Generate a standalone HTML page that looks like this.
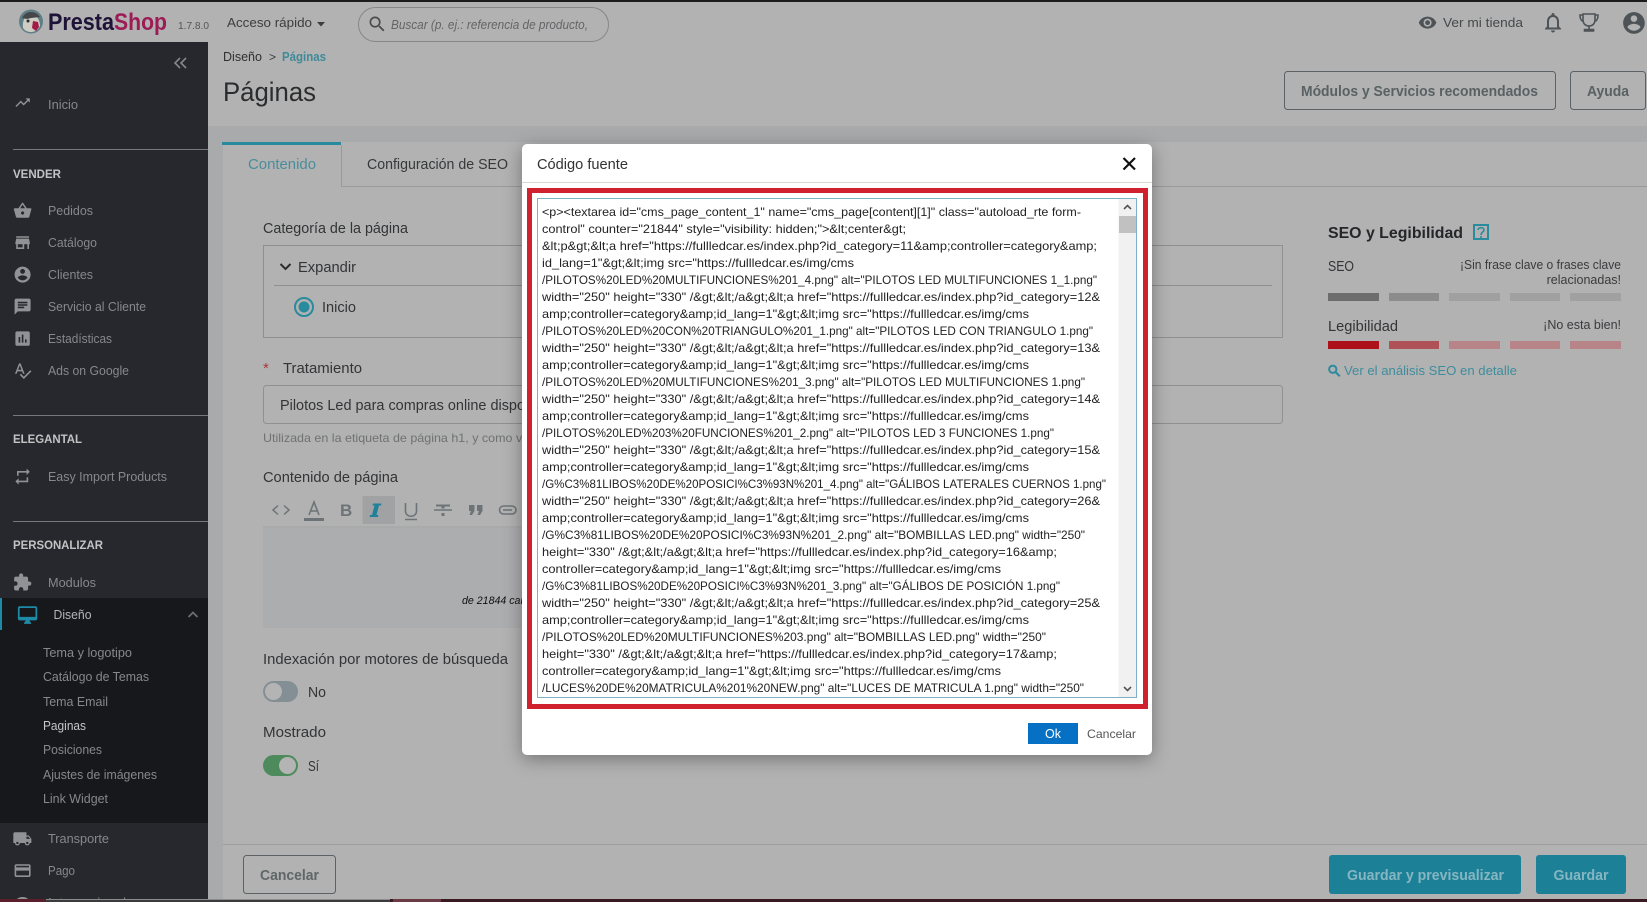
<!DOCTYPE html>
<html lang="es"><head><meta charset="utf-8"><title>Páginas - PrestaShop</title>
<style>
html,body{margin:0;padding:0;width:1647px;height:902px;overflow:hidden;background:#b2b2b2}
svg{display:block;position:absolute;left:0;top:0}
text{font-family:"Liberation Sans",Arial,sans-serif;white-space:pre}
.s{font-size:13px;fill:#87888b}
.h{font-size:12px;font-weight:bold;fill:#c2c3c4}
.c{font-size:14.5px;fill:#333436}
.r{font-size:12.5px;fill:#3a3b3d;text-anchor:end}
.b{font-size:14.5px;font-weight:bold}
#m{position:absolute;left:522px;top:144px;width:630px;height:611px;border-radius:5px;background:#fff;box-shadow:0 4px 18px rgba(0,0,0,.35)}
</style></head><body>
<svg width="1647" height="902" viewBox="0 0 1647 902" xmlns="http://www.w3.org/2000/svg">
<!-- base -->
<rect width="1647" height="902" fill="#b2b2b2"/>
<rect width="1647" height="2" fill="#1c1c1e"/>
<rect x="208" y="126" width="1439" height="16" fill="#a8aaac"/>
<rect x="208" y="126" width="15" height="776" fill="#a8aaac"/>
<rect x="223" y="142" width="1424" height="760" fill="#b2b2b2"/>

<!-- header -->
<circle cx="31" cy="21.5" r="12" fill="#5f7f86"/>
<path d="M23 28c-1-7 2-13 8-13s9 5 9 11c-2 4-5 6-9 6-3 0-6-1-8-4z" fill="#cfccc4"/>
<path d="M22 18c2-4 5-6 9-6s7 2 9 5l-9 1-4 1z" fill="#45464a"/>
<path d="M33 21l5 1 1 5-3 4-4-3z" fill="#a11c47"/>
<circle cx="28" cy="21" r="1.5" fill="#2a2a2e"/>
<text x="48" y="30" font-size="24.5" font-weight="bold" fill="#1f1338" textLength="66" lengthAdjust="spacingAndGlyphs">Presta</text>
<text x="114" y="30" font-size="24.5" font-weight="bold" fill="#9c1c55" textLength="53" lengthAdjust="spacingAndGlyphs">Shop</text>
<text x="178" y="29" font-size="10.5" fill="#555" textLength="31" lengthAdjust="spacingAndGlyphs">1.7.8.0</text>
<text x="227" y="27" font-size="13" fill="#3c3d3f" textLength="85" lengthAdjust="spacingAndGlyphs">Acceso rápido</text>
<path d="M317 22h8l-4 4.5z" fill="#3c3d3f"/>
<rect x="358.5" y="7.5" width="250" height="34" rx="17" fill="none" stroke="#878787"/>
<g transform="translate(367,14) scale(.85)"><path d="M15.5 14h-.79l-.28-.27C15.41 12.59 16 11.11 16 9.5 16 5.91 13.09 3 9.5 3S3 5.91 3 9.5 5.91 16 9.5 16c1.61 0 3.09-.59 4.23-1.57l.27.28v.79l5 4.99L20.49 19l-4.99-5zm-6 0C7.01 14 5 11.99 5 9.5S7.01 5 9.5 5 14 7.01 14 9.5 11.99 14 9.5 14z" fill="#4a4b4d"/></g>
<text x="391" y="29" font-size="12.5" font-style="italic" fill="#636466" textLength="197" lengthAdjust="spacingAndGlyphs">Buscar (p. ej.: referencia de producto,</text>

<g transform="translate(1418,13) scale(.8)"><path d="M12 4.5C7 4.5 2.73 7.61 1 12c1.73 4.39 6 7.5 11 7.5s9.27-3.11 11-7.5c-1.73-4.39-6-7.5-11-7.5zM12 17c-2.76 0-5-2.24-5-5s2.24-5 5-5 5 2.24 5 5-2.24 5-5 5zm0-8c-1.66 0-3 1.34-3 3s1.34 3 3 3 3-1.34 3-3-1.34-3-3-3z" fill="#4d5356"/></g>
<text x="1443" y="27" font-size="13" fill="#45494b" textLength="80" lengthAdjust="spacingAndGlyphs">Ver mi tienda</text>
<g transform="translate(1541,10.5) scale(1)"><path d="M12 22c1.1 0 2-.9 2-2h-4c0 1.1.89 2 2 2zm6-6v-5c0-3.07-1.64-5.64-4.5-6.32V4c0-.83-.67-1.5-1.5-1.5s-1.5.67-1.5 1.5v.68C7.63 5.36 6 7.92 6 11v5l-2 2v1h16v-1l-2-2zm-2 1H8v-6c0-2.48 1.51-4.5 4-4.5s4 2.02 4 4.5v6z" fill="#4d5356"/></g>
<path d="M1583 14h12v6c0 4-3 6-6 6s-6-2-6-6zM1583 15h-3c0 4 1 6 4 7M1595 15h3c0 4-1 6-4 7M1589 26v3M1584.5 29.5h9v1.5h-9z" fill="none" stroke="#4d5356" stroke-width="1.6"/>
<g transform="translate(1621,10) scale(1.08)"><path d="M12 2C6.48 2 2 6.48 2 12s4.48 10 10 10 10-4.48 10-10S17.52 2 12 2zm0 3c1.66 0 3 1.34 3 3s-1.34 3-3 3-3-1.34-3-3 1.34-3 3-3zm0 14.2c-2.5 0-4.71-1.28-6-3.22.03-1.99 4-3.08 6-3.08 1.99 0 5.97 1.09 6 3.08-1.29 1.94-3.5 3.22-6 3.22z" fill="#4d5356"/></g>

<!-- sidebar -->
<rect x="0" y="42" width="208" height="860" fill="#26282d"/>
<rect x="0" y="598" width="208" height="225" fill="#17181c"/>
<rect x="0" y="598" width="2" height="32" fill="#1f8aa6"/>
<path d="M180 58l-5 5 5 5M186 58l-5 5 5 5" fill="none" stroke="#85878a" stroke-width="1.6"/>

<g fill="#909295">
<g transform="translate(14,94) scale(.72)"><path d="M16 6l2.29 2.29-4.88 4.88-4-4L2 16.59 3.41 18l6-6 4 4 6.3-6.29L22 12V6z"/></g>
<g transform="translate(13,201) scale(.8)"><path d="M17.21 9l-4.38-6.56c-.19-.28-.51-.42-.83-.42-.32 0-.64.14-.83.43L6.79 9H2c-.55 0-1 .45-1 1 0 .09.01.18.04.27l2.54 9.27c.23.84 1 1.46 1.92 1.46h13c.92 0 1.69-.62 1.93-1.46l2.54-9.27L23 10c0-.55-.45-1-1-1h-4.79zM9 9l3-4.4L15 9H9zm3 8c-1.1 0-2-.9-2-2s.9-2 2-2 2 .9 2 2-.9 2-2 2z"/></g>
<g transform="translate(13,233) scale(.8)"><path d="M20 4H4v2h16V4zm1 10v-2l-1-5H4l-1 5v2h1v6h10v-6h4v6h2v-6h1zm-9 4H6v-4h6v4z"/></g>
<g transform="translate(13,265) scale(.8)"><path d="M12 2C6.48 2 2 6.48 2 12s4.48 10 10 10 10-4.48 10-10S17.52 2 12 2zm0 3c1.66 0 3 1.34 3 3s-1.34 3-3 3-3-1.34-3-3 1.34-3 3-3zm0 14.2c-2.5 0-4.71-1.28-6-3.22.03-1.99 4-3.08 6-3.08 1.99 0 5.97 1.09 6 3.08-1.29 1.94-3.5 3.22-6 3.22z"/></g>
<g transform="translate(13,297) scale(.8)"><path d="M20 2H4c-1.1 0-1.99.9-1.99 2L2 22l4-4h14c1.1 0 2-.9 2-2V4c0-1.1-.9-2-2-2zM6 9h12v2H6V9zm8 5H6v-2h8v2zm4-6H6V6h12v2z"/></g>
<g transform="translate(13,329) scale(.8)"><path d="M19 3H5c-1.1 0-2 .9-2 2v14c0 1.1.9 2 2 2h14c1.1 0 2-.9 2-2V5c0-1.1-.9-2-2-2zM9 17H7v-7h2v7zm4 0h-2V7h2v10zm4 0h-2v-4h2v4z"/></g>
<g transform="translate(13,361) scale(.8)"><path d="M12.45 16h2.09L9.43 3H7.57L2.46 16h2.09l1.12-3h5.64l1.14 3zm-6.02-5L8.5 5.48 10.57 11H6.43zm15.16.59l-8.09 8.09L9.83 16l-1.41 1.41 5.09 5.09L23 13l-1.41-1.41z"/></g>
<g transform="translate(13,467) scale(.8)"><path d="M7 7h10v3l4-4-4-4v3H5v6h2V7zm10 10H7v-3l-4 4 4 4v-3h12v-6h-2v4z"/></g>
<g transform="translate(12.5,572.5) scale(.82)"><path d="M20.5 11H19V7c0-1.1-.9-2-2-2h-4V3.5C13 2.12 11.88 1 10.5 1S8 2.12 8 3.5V5H4c-1.1 0-1.99.9-1.99 2v3.8H3.5c1.49 0 2.7 1.21 2.7 2.7s-1.21 2.7-2.7 2.7H2V20c0 1.1.9 2 2 2h3.8v-1.5c0-1.49 1.21-2.7 2.7-2.7 1.49 0 2.7 1.21 2.7 2.7V22H17c1.1 0 2-.9 2-2v-4h1.5c1.38 0 2.5-1.12 2.5-2.5S21.88 11 20.5 11z"/></g>
<g transform="translate(12.5,829) scale(.82)"><path d="M20 8h-3V4H3c-1.1 0-2 .9-2 2v11h2c0 1.66 1.34 3 3 3s3-1.34 3-3h6c0 1.66 1.34 3 3 3s3-1.34 3-3h2v-5l-3-4zM6 18.5c-.83 0-1.5-.67-1.5-1.5s.67-1.5 1.5-1.5 1.5.67 1.5 1.5-.67 1.5-1.5 1.5zm13.5-9l1.96 2.5H17V9.5h2.5zm-1.5 9c-.83 0-1.5-.67-1.5-1.5s.67-1.5 1.5-1.5 1.5.67 1.5 1.5-.67 1.5-1.5 1.5z"/></g>
<g transform="translate(13,861) scale(.8)"><path d="M20 4H4c-1.11 0-1.99.89-1.99 2L2 18c0 1.11.89 2 2 2h16c1.11 0 2-.89 2-2V6c0-1.11-.89-2-2-2zm0 14H4v-6h16v6zm0-10H4V6h16v2z"/></g>
<circle cx="22.5" cy="906" r="9"/>
</g>
<g transform="translate(17,604.5) scale(.88)"><path d="M21 2H3c-1.1 0-2 .9-2 2v12c0 1.1.9 2 2 2h7l-2 3v1h8v-1l-2-3h7c1.1 0 2-.9 2-2V4c0-1.1-.9-2-2-2zm0 12H3V4h18v10z" fill="#1f8aa6"/></g>
<path d="M188.5 617l4.5-4.5 4.5 4.5" fill="none" stroke="#6c6d70" stroke-width="1.8"/>

<g stroke="#77787a" stroke-width="1"><path d="M13 149.5h195M13 415.5h195M13 521.5h195"/></g>

<text class="s" x="48" y="109" textLength="30" lengthAdjust="spacingAndGlyphs">Inicio</text>
<text class="h" x="13" y="178" textLength="48" lengthAdjust="spacingAndGlyphs">VENDER</text>
<text class="s" x="48" y="215" textLength="45" lengthAdjust="spacingAndGlyphs">Pedidos</text>
<text class="s" x="48" y="247" textLength="49" lengthAdjust="spacingAndGlyphs">Catálogo</text>
<text class="s" x="48" y="279" textLength="45" lengthAdjust="spacingAndGlyphs">Clientes</text>
<text class="s" x="48" y="311" textLength="98" lengthAdjust="spacingAndGlyphs">Servicio al Cliente</text>
<text class="s" x="48" y="343" textLength="64" lengthAdjust="spacingAndGlyphs">Estadísticas</text>
<text class="s" x="48" y="375" textLength="81" lengthAdjust="spacingAndGlyphs">Ads on Google</text>
<text class="h" x="13" y="443" textLength="69" lengthAdjust="spacingAndGlyphs">ELEGANTAL</text>
<text class="s" x="48" y="481" textLength="119" lengthAdjust="spacingAndGlyphs">Easy Import Products</text>
<text class="h" x="13" y="549" textLength="90" lengthAdjust="spacingAndGlyphs">PERSONALIZAR</text>
<text class="s" x="48" y="587" textLength="48" lengthAdjust="spacingAndGlyphs">Modulos</text>
<text class="s" x="53.5" y="619" textLength="38" lengthAdjust="spacingAndGlyphs" style="fill:#b5b6b8">Diseño</text>
<text class="s" x="43" y="657" textLength="89" lengthAdjust="spacingAndGlyphs">Tema y logotipo</text>
<text class="s" x="43" y="681" textLength="106" lengthAdjust="spacingAndGlyphs">Catálogo de Temas</text>
<text class="s" x="43" y="706" textLength="65" lengthAdjust="spacingAndGlyphs">Tema Email</text>
<text class="s" x="43" y="730" textLength="43" lengthAdjust="spacingAndGlyphs" style="fill:#c6c7c8">Paginas</text>
<text class="s" x="43" y="754" textLength="59" lengthAdjust="spacingAndGlyphs">Posiciones</text>
<text class="s" x="43" y="779" textLength="114" lengthAdjust="spacingAndGlyphs">Ajustes de imágenes</text>
<text class="s" x="43" y="803" textLength="65" lengthAdjust="spacingAndGlyphs">Link Widget</text>
<text class="s" x="48" y="843" textLength="61" lengthAdjust="spacingAndGlyphs">Transporte</text>
<text class="s" x="48" y="875" textLength="27" lengthAdjust="spacingAndGlyphs">Pago</text>
<text class="s" x="48" y="907" textLength="78" lengthAdjust="spacingAndGlyphs">Internacional</text>

<!-- page head -->
<text x="223" y="61" font-size="12.5" fill="#2f3032" textLength="39" lengthAdjust="spacingAndGlyphs">Diseño</text>
<text x="269" y="61" font-size="12" fill="#3c3d3f">&gt;</text>
<text x="282" y="61" font-size="12.5" font-weight="bold" fill="#3f8a99" textLength="44" lengthAdjust="spacingAndGlyphs">Páginas</text>
<text x="223" y="101" font-size="27" fill="#2b2c2e" textLength="93" lengthAdjust="spacingAndGlyphs">Páginas</text>

<rect x="1284.5" y="71.5" width="271" height="38" rx="3" fill="none" stroke="#5b6164"/>
<text class="b" x="1301" y="96" fill="#596164" textLength="237" lengthAdjust="spacingAndGlyphs">Módulos y Servicios recomendados</text>
<rect x="1570.5" y="71.5" width="75" height="38" rx="3" fill="none" stroke="#5b6164"/>
<text class="b" x="1587" y="96" fill="#596164" textLength="42" lengthAdjust="spacingAndGlyphs">Ayuda</text>

<!-- tabs -->
<path d="M341.5 186.5H1647" stroke="#999a9b" fill="none"/>
<path d="M341.5 145V186.5" stroke="#999a9b" fill="none"/>
<rect x="222" y="142" width="119" height="3" fill="#288a9f"/>
<text x="248" y="169" font-size="15" fill="#4a8d9b" textLength="68" lengthAdjust="spacingAndGlyphs">Contenido</text>
<text x="367" y="169" font-size="15" fill="#37383a" textLength="141" lengthAdjust="spacingAndGlyphs">Configuración de SEO</text>

<!-- form -->
<text class="c" x="263" y="233" textLength="145" lengthAdjust="spacingAndGlyphs">Categoría de la página</text>
<rect x="263.5" y="245.5" width="1019" height="92" fill="none" stroke="#8f9091"/>
<path d="M280.5 264l5 5 5-5" fill="none" stroke="#2c2d2f" stroke-width="2"/>
<text class="c" x="298" y="272" textLength="58" lengthAdjust="spacingAndGlyphs">Expandir</text>
<path d="M274 285.5h998" stroke="#8f9091" fill="none"/>
<circle cx="304" cy="307" r="9" fill="none" stroke="#2a8a9e" stroke-width="2"/>
<circle cx="304" cy="307" r="5.5" fill="#2a8a9e"/>
<text class="c" x="322" y="312" textLength="34" lengthAdjust="spacingAndGlyphs">Inicio</text>

<text x="263" y="373" font-size="15" fill="#a83a3e">*</text>
<text class="c" x="283" y="373" textLength="79" lengthAdjust="spacingAndGlyphs">Tratamiento</text>
<rect x="263.5" y="385.5" width="1019" height="38" rx="3" fill="none" stroke="#8f9091"/>
<text class="c" x="280" y="410" textLength="245" lengthAdjust="spacingAndGlyphs">Pilotos Led para compras online dispo</text>
<text x="263" y="442" font-size="12" fill="#6f7173" textLength="262" lengthAdjust="spacingAndGlyphs">Utilizada en la etiqueta de página h1, y como vi</text>
<text class="c" x="263" y="482" textLength="135" lengthAdjust="spacingAndGlyphs">Contenido de página</text>

<!-- editor toolbar -->
<rect x="362.5" y="496" width="32.5" height="28" fill="#a1a2a3"/>
<path d="M263 527h270" stroke="#a0a1a2" fill="none"/>
<rect x="263" y="528" width="270" height="100" fill="#acadae"/>
<path d="M278 505.5l-5 4.5 5 4.5M284 505.5l5 4.5-5 4.5" fill="none" stroke="#6d7477" stroke-width="1.5"/>
<path d="M309 515l5-13 5 13M311 511h6" fill="none" stroke="#6d7477" stroke-width="1.6"/>
<rect x="304" y="518" width="20" height="3" fill="#6d7477"/>
<text x="340" y="516" font-size="17" font-weight="bold" fill="#6d7477">B</text>
<path d="M373 503.5h8.5l-.5 2h-2l-2.5 9.5h2l-.5 2h-8.5l.5-2h2l2.5-9.5h-2z" fill="#21819a"/>
<path d="M405.5 503v8c0 7 11 7 11 0v-8M405 519.5h12" fill="none" stroke="#6d7477" stroke-width="1.6"/>
<path d="M434 510h18" stroke="#6d7477" stroke-width="1.5" fill="none"/>
<path d="M436 504.5h14v2h-5.5v2h-3v-2H436zM441.5 513h3v3h-3z" fill="#6d7477"/>
<path d="M469 505h5.5v6l-2.5 4h-2.5l1.5-4H469zM477 505h5.5v6l-2.5 4h-2.5l1.5-4H477z" fill="#6d7477"/>
<rect x="499.5" y="506" width="16.5" height="8" rx="4" fill="none" stroke="#6d7477" stroke-width="1.6"/>
<path d="M503 510h9" stroke="#6d7477" stroke-width="1.6" fill="none"/>
<text x="462" y="604" font-size="11" font-style="italic" fill="#111" textLength="62" lengthAdjust="spacingAndGlyphs">de 21844 car</text>

<!-- toggles -->
<text class="c" x="263" y="664" textLength="245" lengthAdjust="spacingAndGlyphs">Indexación por motores de búsqueda</text>
<rect x="263" y="681" width="35" height="21" rx="10.5" fill="#848f95"/>
<circle cx="273.5" cy="691.5" r="8.5" fill="#b4b4b4"/>
<text class="c" x="308" y="697" textLength="18" lengthAdjust="spacingAndGlyphs">No</text>
<text class="c" x="263" y="737" textLength="63" lengthAdjust="spacingAndGlyphs">Mostrado</text>
<rect x="263" y="755" width="35" height="21" rx="10.5" fill="#4e8b5c"/>
<circle cx="287.5" cy="765.5" r="8.5" fill="#b4b4b4"/>
<text class="c" x="308" y="771" textLength="11" lengthAdjust="spacingAndGlyphs">Sí</text>

<!-- SEO side -->
<text x="1328" y="238" font-size="16" font-weight="bold" fill="#25262a" textLength="135" lengthAdjust="spacingAndGlyphs">SEO y Legibilidad</text>
<rect x="1474" y="225" width="14" height="14" fill="none" stroke="#2a8a9e" stroke-width="2"/>
<path d="M1478 230c0-3 6-3 6 0 0 2-3 2-3 5M1481 236v4" fill="none" stroke="#2a8a9e" stroke-width="1.6"/>
<text class="c" x="1328" y="271" textLength="26" lengthAdjust="spacingAndGlyphs">SEO</text>
<text class="r" x="1460" y="269" textLength="161" lengthAdjust="spacingAndGlyphs" style="text-anchor:start">¡Sin frase clave o frases clave</text>
<text class="r" x="1621" y="284">relacionadas!</text>
<rect x="1328" y="293" width="51" height="8" fill="#6d6d6d"/>
<rect x="1389" y="293" width="50" height="8" fill="#8c8c8c"/>
<rect x="1449" y="293" width="51" height="8" fill="#a0a0a0"/>
<rect x="1510" y="293" width="50" height="8" fill="#a0a0a0"/>
<rect x="1570" y="293" width="51" height="8" fill="#a0a0a0"/>
<text class="c" x="1328" y="331" textLength="70" lengthAdjust="spacingAndGlyphs">Legibilidad</text>
<text class="r" x="1621" y="329">¡No esta bien!</text>
<rect x="1328" y="341" width="51" height="8" fill="#ad1119"/>
<rect x="1389" y="341" width="50" height="8" fill="#ae5257"/>
<rect x="1449" y="341" width="51" height="8" fill="#b78488"/>
<rect x="1510" y="341" width="50" height="8" fill="#b78488"/>
<rect x="1570" y="341" width="51" height="8" fill="#b78488"/>
<g transform="translate(1326.5,363) scale(.66)"><path d="M15.5 14h-.79l-.28-.27C15.41 12.59 16 11.11 16 9.5 16 5.91 13.09 3 9.5 3S3 5.91 3 9.5 5.91 16 9.5 16c1.61 0 3.09-.59 4.23-1.57l.27.28v.79l5 4.99L20.49 19l-4.99-5zm-6 0C7.01 14 5 11.99 5 9.5S7.01 5 9.5 5 14 7.01 14 9.5 11.99 14 9.5 14z" fill="#2a8a9e" stroke="#2a8a9e"/></g>
<text x="1344" y="375" font-size="13" fill="#3f8c9c" textLength="173" lengthAdjust="spacingAndGlyphs">Ver el análisis SEO en detalle</text>

<!-- footer -->
<path d="M223 844.5h1424" stroke="#9d9e9f" fill="none"/>
<rect x="243.5" y="855.5" width="92" height="38" rx="3" fill="none" stroke="#5b6164"/>
<text class="b" x="260" y="880" fill="#5f6669" textLength="59" lengthAdjust="spacingAndGlyphs">Cancelar</text>
<rect x="1329" y="855" width="192" height="39" rx="3" fill="#1c8097"/>
<text class="b" x="1347" y="880" fill="#86b6c2" textLength="157" lengthAdjust="spacingAndGlyphs">Guardar y previsualizar</text>
<rect x="1536" y="855" width="90" height="39" rx="3" fill="#1c8097"/>
<text class="b" x="1553.5" y="880" fill="#86b6c2" textLength="55" lengthAdjust="spacingAndGlyphs">Guardar</text>

<!-- bottom strip -->
<rect x="0" y="899" width="1647" height="3" fill="#3a1a22"/>
<rect x="0" y="899" width="46" height="3" fill="#5a1f2a"/>
<rect x="46" y="899" width="344" height="3" fill="#3b3b3d"/>
<rect x="46" y="899" width="344" height="1" fill="#8b8b8b"/>
<rect x="393" y="899" width="48" height="3" fill="#6b3a45"/>
</svg>

<!-- modal -->
<div id="m"></div>
<svg width="1647" height="902" viewBox="0 0 1647 902" xmlns="http://www.w3.org/2000/svg">
<text x="537" y="169" font-size="14.5" fill="#333" textLength="91" lengthAdjust="spacingAndGlyphs">Código fuente</text>
<path d="M1123.5 158l11.5 11.5M1135 158l-11.5 11.5" stroke="#111" stroke-width="2.2" fill="none"/>
<path d="M522 182.5h630" stroke="#d9d9d4" fill="none"/>
<rect x="529.5" y="190.5" width="616" height="516" fill="none" stroke="#d0222e" stroke-width="5"/>
<rect x="537.5" y="198.5" width="599" height="499" fill="#fff" stroke="#7fb0c8"/>
<rect x="1118.5" y="199" width="17.5" height="498" fill="#f1f1f1"/>
<rect x="1119" y="216" width="17" height="17" fill="#c1c1c1"/>
<path d="M1124 209l3.5-3.5 3.5 3.5M1124 687l3.5 3.5 3.5-3.5" fill="none" stroke="#555" stroke-width="1.6"/>

<g font-size="12" fill="#222">
<text x="542" y="216" textLength="539" lengthAdjust="spacingAndGlyphs">&lt;p&gt;&lt;textarea id="cms_page_content_1" name="cms_page[content][1]" class="autoload_rte form-</text>
<text x="542" y="233" textLength="364" lengthAdjust="spacingAndGlyphs">control" counter="21844" style="visibility: hidden;"&gt;&amp;lt;center&amp;gt;</text>
<text x="542" y="250" textLength="555" lengthAdjust="spacingAndGlyphs">&amp;lt;p&amp;gt;&amp;lt;a href="https://fullledcar.es/index.php?id_category=11&amp;amp;controller=category&amp;amp;</text>
<text x="542" y="267" textLength="312" lengthAdjust="spacingAndGlyphs">id_lang=1"&amp;gt;&amp;lt;img src="https://fullledcar.es/img/cms</text>
<text x="542" y="284" textLength="555" lengthAdjust="spacingAndGlyphs">/PILOTOS%20LED%20MULTIFUNCIONES%201_4.png" alt="PILOTOS LED MULTIFUNCIONES 1_1.png"</text>
<text x="542" y="301" textLength="558" lengthAdjust="spacingAndGlyphs">width="250" height="330" /&amp;gt;&amp;lt;/a&amp;gt;&amp;lt;a href="https://fullledcar.es/index.php?id_category=12&amp;</text>
<text x="542" y="318" textLength="487" lengthAdjust="spacingAndGlyphs">amp;controller=category&amp;amp;id_lang=1"&amp;gt;&amp;lt;img src="https://fullledcar.es/img/cms</text>
<text x="542" y="335" textLength="551" lengthAdjust="spacingAndGlyphs">/PILOTOS%20LED%20CON%20TRIANGULO%201_1.png" alt="PILOTOS LED CON TRIANGULO 1.png"</text>
<text x="542" y="352" textLength="558" lengthAdjust="spacingAndGlyphs">width="250" height="330" /&amp;gt;&amp;lt;/a&amp;gt;&amp;lt;a href="https://fullledcar.es/index.php?id_category=13&amp;</text>
<text x="542" y="369" textLength="487" lengthAdjust="spacingAndGlyphs">amp;controller=category&amp;amp;id_lang=1"&amp;gt;&amp;lt;img src="https://fullledcar.es/img/cms</text>
<text x="542" y="386" textLength="543" lengthAdjust="spacingAndGlyphs">/PILOTOS%20LED%20MULTIFUNCIONES%201_3.png" alt="PILOTOS LED MULTIFUNCIONES 1.png"</text>
<text x="542" y="403" textLength="558" lengthAdjust="spacingAndGlyphs">width="250" height="330" /&amp;gt;&amp;lt;/a&amp;gt;&amp;lt;a href="https://fullledcar.es/index.php?id_category=14&amp;</text>
<text x="542" y="420" textLength="487" lengthAdjust="spacingAndGlyphs">amp;controller=category&amp;amp;id_lang=1"&amp;gt;&amp;lt;img src="https://fullledcar.es/img/cms</text>
<text x="542" y="437" textLength="512" lengthAdjust="spacingAndGlyphs">/PILOTOS%20LED%203%20FUNCIONES%201_2.png" alt="PILOTOS LED 3 FUNCIONES 1.png"</text>
<text x="542" y="454" textLength="558" lengthAdjust="spacingAndGlyphs">width="250" height="330" /&amp;gt;&amp;lt;/a&amp;gt;&amp;lt;a href="https://fullledcar.es/index.php?id_category=15&amp;</text>
<text x="542" y="471" textLength="487" lengthAdjust="spacingAndGlyphs">amp;controller=category&amp;amp;id_lang=1"&amp;gt;&amp;lt;img src="https://fullledcar.es/img/cms</text>
<text x="542" y="488" textLength="564" lengthAdjust="spacingAndGlyphs">/G%C3%81LIBOS%20DE%20POSICI%C3%93N%201_4.png" alt="GÁLIBOS LATERALES CUERNOS 1.png"</text>
<text x="542" y="505" textLength="558" lengthAdjust="spacingAndGlyphs">width="250" height="330" /&amp;gt;&amp;lt;/a&amp;gt;&amp;lt;a href="https://fullledcar.es/index.php?id_category=26&amp;</text>
<text x="542" y="522" textLength="487" lengthAdjust="spacingAndGlyphs">amp;controller=category&amp;amp;id_lang=1"&amp;gt;&amp;lt;img src="https://fullledcar.es/img/cms</text>
<text x="542" y="539" textLength="543" lengthAdjust="spacingAndGlyphs">/G%C3%81LIBOS%20DE%20POSICI%C3%93N%201_2.png" alt="BOMBILLAS LED.png" width="250"</text>
<text x="542" y="556" textLength="515" lengthAdjust="spacingAndGlyphs">height="330" /&amp;gt;&amp;lt;/a&amp;gt;&amp;lt;a href="https://fullledcar.es/index.php?id_category=16&amp;amp;</text>
<text x="542" y="573" textLength="459" lengthAdjust="spacingAndGlyphs">controller=category&amp;amp;id_lang=1"&amp;gt;&amp;lt;img src="https://fullledcar.es/img/cms</text>
<text x="542" y="590" textLength="518" lengthAdjust="spacingAndGlyphs">/G%C3%81LIBOS%20DE%20POSICI%C3%93N%201_3.png" alt="GÁLIBOS DE POSICIÓN 1.png"</text>
<text x="542" y="607" textLength="558" lengthAdjust="spacingAndGlyphs">width="250" height="330" /&amp;gt;&amp;lt;/a&amp;gt;&amp;lt;a href="https://fullledcar.es/index.php?id_category=25&amp;</text>
<text x="542" y="624" textLength="487" lengthAdjust="spacingAndGlyphs">amp;controller=category&amp;amp;id_lang=1"&amp;gt;&amp;lt;img src="https://fullledcar.es/img/cms</text>
<text x="542" y="641" textLength="504" lengthAdjust="spacingAndGlyphs">/PILOTOS%20LED%20MULTIFUNCIONES%203.png" alt="BOMBILLAS LED.png" width="250"</text>
<text x="542" y="658" textLength="515" lengthAdjust="spacingAndGlyphs">height="330" /&amp;gt;&amp;lt;/a&amp;gt;&amp;lt;a href="https://fullledcar.es/index.php?id_category=17&amp;amp;</text>
<text x="542" y="675" textLength="459" lengthAdjust="spacingAndGlyphs">controller=category&amp;amp;id_lang=1"&amp;gt;&amp;lt;img src="https://fullledcar.es/img/cms</text>
<text x="542" y="692" textLength="542" lengthAdjust="spacingAndGlyphs">/LUCES%20DE%20MATRICULA%201%20NEW.png" alt="LUCES DE MATRICULA 1.png" width="250"</text>
</g>
<rect x="1028" y="723" width="50" height="21" fill="#0570c4"/>
<text x="1045" y="738" font-size="13" fill="#fff" textLength="16" lengthAdjust="spacingAndGlyphs">Ok</text>
<text x="1087" y="738" font-size="12" fill="#555" textLength="49" lengthAdjust="spacingAndGlyphs">Cancelar</text>
</svg>
</body></html>
